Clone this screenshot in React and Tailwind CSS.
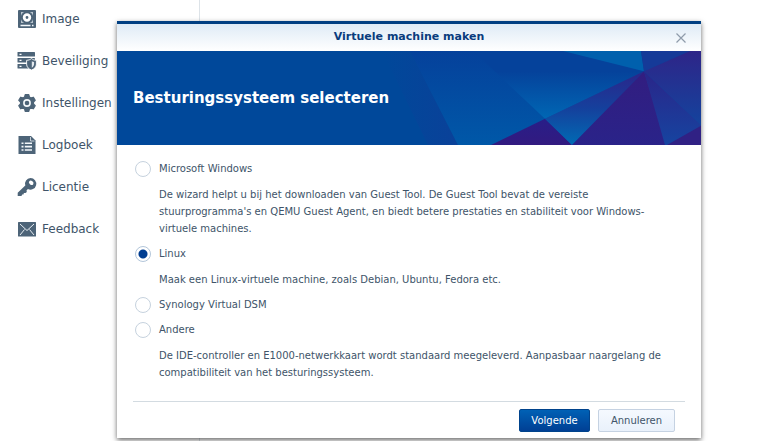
import { useState } from 'react';

const menuItems = [
  { name: 'Image', icon: DiskIcon },
  { name: 'Beveiliging', icon: ProtectionIcon },
  { name: 'Instellingen', icon: GearIcon },
  { name: 'Logboek', icon: LogIcon },
  { name: 'Licentie', icon: KeyIcon },
  { name: 'Feedback', icon: MailIcon },
];

const systems = [
  {
    id: 'windows',
    name: 'Microsoft Windows',
    description:
      "De wizard helpt u bij het downloaden van Guest Tool. De Guest Tool bevat de vereiste stuurprogramma's en QEMU Guest Agent, en biedt betere prestaties en stabiliteit voor Windows-virtuele machines.",
  },
  {
    id: 'linux',
    name: 'Linux',
    description: 'Maak een Linux-virtuele machine, zoals Debian, Ubuntu, Fedora etc.',
  },
  { id: 'dsm', name: 'Synology Virtual DSM' },
  {
    id: 'other',
    name: 'Andere',
    description:
      'De IDE-controller en E1000-netwerkkaart wordt standaard meegeleverd. Aanpasbaar naargelang de compatibiliteit van het besturingssysteem.',
  },
];

function DiskIcon() {
  return (
    <svg className="h-[18px] w-[18px]" viewBox="0 0 18 18" aria-hidden="true">
      <rect width="18" height="18" rx="1" fill="#4d6478" />
      <path d="M3 2h12v11H3z" fill="#b9c5cf" />
      <circle cx="9" cy="7.5" r="6.200" fill="#4d6478" />
      <circle cx="9" cy="7.5" r="2.800" fill="none" stroke="#fff" strokeWidth="2.800" />
      <path d="M2.5 15.500h10M14 15.500h1.500" stroke="#f4f8fb" strokeWidth="1.400" />
    </svg>
  );
}

function ProtectionIcon() {
  return (
    <svg className="h-[18px] w-[18px] overflow-visible" viewBox="0 0 18 18" aria-hidden="true">
      <g fill="#4d6478">
        <rect x="-.5" width="17.500" height="4.600" rx=".6" />
        <rect x="-.5" y="6" width="17.500" height="4.600" rx=".6" />
        <rect x="-.5" y="12" width="12" height="4.600" rx=".6" />
      </g>
      <path d="M1.500 2.300h2M1.500 8.300h2M1.500 14.300h2" stroke="#fff" strokeWidth="1.200" />
      <path
        d="M13.500 6.600c1.500 1.200 3 1.600 4.900 1.700v3.800c0 3-2 4.800-4.900 6-2.900-1.200-4.900-3-4.900-6V8.300c1.900-.1 3.400-.5 4.900-1.700z"
        fill="#4d6478"
        stroke="#fff"
        strokeWidth=".9"
      />
      <path d="M13.800 9.300c.9.500 1.500.7 2.300.8v2c0 1.600-.8 2.700-2.300 3.600z" fill="#e3e9ee" />
    </svg>
  );
}

function GearIcon() {
  return (
    <svg className="h-[18px] w-[18px]" viewBox="0 0 18 18" aria-hidden="true">
      <path
        d="M7.200.6h3.600l.6 2.300 1.700 1 2.300-.7 1.800 3.100-1.700 1.700v2l1.700 1.700-1.800 3.100-2.300-.7-1.700 1-.6 2.300H7.200l-.6-2.300-1.700-1-2.300.7-1.800-3.100L2.500 10V8L.8 6.300l1.800-3.100 2.300.7 1.700-1z"
        fill="#4d6478"
        stroke="#4d6478"
        strokeWidth="1.200"
        strokeLinejoin="round"
      />
      <circle cx="9" cy="9" r="3.100" fill="#4d6478" stroke="#f4f8fb" strokeWidth="1.600" />
    </svg>
  );
}

function LogIcon() {
  return (
    <svg className="h-[18px] w-[18px]" viewBox="0 0 18 18" aria-hidden="true">
      <path d="M.5 0h12.500l4.500 4.500V18H.5z" fill="#4d6478" />
      <path d="M12.500 1v4h4" fill="none" stroke="#dfe6ec" strokeWidth=".8" />
      <path
        d="M3.500 7.200h2M3.500 10.600h2M3.500 14h2M6.800 7.200H14M6.800 10.600H14M6.800 14H14"
        stroke="#f4f8fb"
        strokeWidth="1.600"
      />
    </svg>
  );
}

function KeyIcon() {
  return (
    <svg className="h-[18px] w-[18px] overflow-visible" viewBox="0 0 18 18" aria-hidden="true">
      <path
        d="M12.500 0a5.800 5.800 0 1 1-2.600 11L8.500 12.400l.3 1.500-1.300 1.200-1.600-.2-.4 1.500-1.400.2-.6 1.400H-.3v-3.200L7.300 7.600A5.800 5.800 0 0 1 12.500 0z"
        fill="#4d6478"
      />
      <ellipse cx="13.200" cy="4.800" rx="2.500" ry="1.900" transform="rotate(40 13.200 4.800)" fill="#fff" />
    </svg>
  );
}

function MailIcon() {
  return (
    <svg className="h-[18px] w-[18px]" viewBox="0 0 18 18" aria-hidden="true">
      <rect y="2" width="18" height="14.500" rx=".5" fill="#4d6478" />
      <path
        d="M2 4l7 6.500L16 4M2 15l4.500-5.500M16 15l-4.500-5.500"
        fill="none"
        stroke="#e8eef3"
        strokeWidth="1"
      />
    </svg>
  );
}

function BannerArt() {
  return (
    <svg className="h-full w-[584px] shrink-0" viewBox="0 0 584 93" preserveAspectRatio="none" aria-hidden="true">
      <defs>
        <linearGradient id="sky" x1="0" y1="0" x2="0" y2="1">
          <stop offset="0.3" stopColor="#05429b" />
          <stop offset="1" stopColor="#0067b4" />
        </linearGradient>
        <linearGradient id="base" x1="0" y1="0" x2="0" y2="1">
          <stop offset="0" stopColor="#05419b" />
          <stop offset="1" stopColor="#0058a8" />
        </linearGradient>
        <linearGradient id="left" x1="0" y1="0" x2="1" y2="0">
          <stop offset="0" stopColor="#00489a" />
          <stop offset="1" stopColor="#0a4199" />
        </linearGradient>
        <linearGradient id="wedge" x1="0" y1="0" x2="0" y2="1">
          <stop offset="0" stopColor="#2b258a" />
          <stop offset="0.5" stopColor="#15409c" />
          <stop offset="1" stopColor="#006bb4" />
        </linearGradient>
        <linearGradient id="purple" x1="0" y1="0" x2="0" y2="1">
          <stop offset="0" stopColor="#321d80" />
          <stop offset="1" stopColor="#2a2389" />
        </linearGradient>
        <linearGradient id="triangle" x1="0" y1="0" x2="0" y2="1">
          <stop offset="0" stopColor="#281e88" />
          <stop offset="1" stopColor="#321a80" />
        </linearGradient>
        <linearGradient id="corner" x1="0" y1="0" x2="0" y2="1">
          <stop offset="0" stopColor="#2e2588" />
          <stop offset="1" stopColor="#14439d" />
        </linearGradient>
        <linearGradient id="lower" x1="0" y1="0" x2="0" y2="1">
          <stop offset="0" stopColor="#2a2589" />
          <stop offset="1" stopColor="#1644a0" />
        </linearGradient>
      </defs>
      <path d="M0 0h584v93H0z" fill="#00489a" />
      <path d="M265 0h28l48 93h-30z" fill="url(#left)" />
      <path d="M293 0h291v93H341z" fill="url(#base)" />
      <path d="M356 0h90l81 20-99 47z" fill="url(#sky)" />
      <path d="M446 0h78l3 20z" fill="#0060ad" />
      <path d="M524 0h49l-46 20z" fill="#153a98" />
      <path d="M428 67 374 93h81z" fill="url(#triangle)" />
      <path d="M527 20 428 67l27 26z" fill="url(#wedge)" />
      <path d="M527 20 455 93h95z" fill="url(#purple)" />
      <path d="M527 20 573 0h11v73z" fill="url(#corner)" />
      <path d="m527 20 57 53v20h-36z" fill="url(#lower)" />
      <path d="m584 74-34 19h34z" fill="#302184" />
    </svg>
  );
}

const SystemOption = ({ system, checked, onSelect }) => {
  return (
    <div>
      <label className="flex h-[25px] items-center gap-2 text-[10px]">
        <input
          type="radio"
          name="system"
          value={system.id}
          checked={checked}
          onChange={() => onSelect(system.id)}
          className="h-4 w-4 shrink-0 appearance-none rounded-full border border-[#c6d2de] bg-white checked:border-[#b3c6da] checked:bg-[radial-gradient(circle,#003d91_4px,#ffffff_5px)]"
        />
        {system.name}
      </label>
      {system.description && (
        <p className="pt-[5px] pr-3 pb-1 pl-6 text-[10px] leading-[17px]">{system.description}</p>
      )}
    </div>
  );
};

const App = () => {
  const [selected, setSelected] = useState('linux');

  return (
    <div className="relative min-h-screen overflow-hidden bg-white font-['DejaVu_Sans',Verdana,sans-serif] text-[#405469]">
      <nav className="absolute inset-y-0 left-0 w-[200px] border-r border-[#dde3e8] pt-[10px] pl-[18px]">
        <ul className="flex flex-col gap-6">
          {menuItems.map(({ name, icon: Icon }) => (
            <li key={name}>
              <a href="#" className="flex h-[18px] items-center gap-[6px] text-[12px]">
                <Icon />
                {name}
              </a>
            </li>
          ))}
        </ul>
      </nav>

      <div className="relative pt-[21px] pr-[69px] pb-[2px] pl-[117px]">
        <div
          role="dialog"
          aria-labelledby="dialog-title"
          className="border-t-3 border-[#003f82] bg-white shadow-[0_2px_5px_0_rgba(0,0,0,0.6)]"
        >
          <header className="flex h-[27px] items-center bg-linear-to-b from-[#dfebf6] to-white px-3">
            <span className="w-4" />
            <h1 id="dialog-title" className="flex-1 text-center text-[11px] font-bold text-[#0a3c7d]">
              Virtuele machine maken
            </h1>
            <button type="button" aria-label="Sluiten" className="flex w-4 justify-center">
              <svg className="h-[10px] w-[10px]" viewBox="0 0 10 10" aria-hidden="true">
                <path d="m.5.500 9 9m0-9-9 9" stroke="#8f9baa" strokeWidth="1.200" />
              </svg>
            </button>
          </header>

          <div className="grid h-[94px] overflow-hidden bg-[#00489a]">
            <div className="col-start-1 row-start-1 flex h-[94px] justify-end overflow-hidden">
              <BannerArt />
            </div>
            <h2 className="z-10 col-start-1 row-start-1 self-center px-4 text-[15px] font-bold text-white">
              Besturingssysteem selecteren
            </h2>
          </div>

          <form className="px-4" onSubmit={(e) => e.preventDefault()}>
            <div className="pt-[11px] pr-1 pb-4 pl-[2px]">
              {systems.map((system) => (
                <SystemOption
                  key={system.id}
                  system={system}
                  checked={selected === system.id}
                  onSelect={setSelected}
                />
              ))}
            </div>
            <div className="flex justify-end gap-2 border-t border-[#d3dbe1] px-[10px] pt-[7px] pb-[6px]">
              <button
                type="submit"
                className="h-[23px] w-[71px] rounded-[2px] border border-[#00438c] bg-linear-to-b from-[#0061b5] to-[#003f94] text-[10px] text-white"
              >
                Volgende
              </button>
              <button
                type="button"
                className="h-[23px] w-[77px] rounded-[2px] border border-[#c5d2e2] bg-linear-to-b from-[#f5f9ff] to-[#e9f1fb] text-[10px]"
              >
                Annuleren
              </button>
            </div>
          </form>
        </div>
      </div>
    </div>
  );
};

export default App;
